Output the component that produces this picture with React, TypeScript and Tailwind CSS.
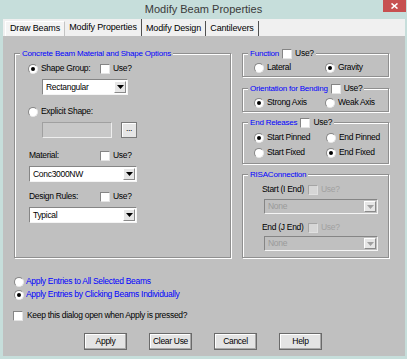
import React from 'react';

function Check({ disabled }: { disabled?: boolean }) {
  return (
    <span
      className={`block w-[10px] h-[10px] shrink-0 border ${
        disabled
          ? 'bg-[#d6d6d6] border-[#a4a4a4] border-r-[#e0e0e0] border-b-[#e0e0e0]'
          : 'bg-white border-[#858585] border-r-[#e4e4e4] border-b-[#e4e4e4]'
      }`}
    />
  );
}

function Radio({ on }: { on?: boolean }) {
  return (
    <span className="flex items-center justify-center w-[10px] h-[10px] shrink-0 rounded-full bg-white border border-[#858585] border-r-[#e8e8e8] border-b-[#e8e8e8]">
      {on && <span className="w-[4px] h-[4px] rounded-full bg-black" />}
    </span>
  );
}

function Select({ value, className, disabled }: { value: string; className: string; disabled?: boolean }) {
  return (
    <div
      className={`flex items-stretch border border-[#858585] border-r-[#f4f4f4] border-b-[#f4f4f4] ${
        disabled ? 'bg-[#c0c0c0] text-[#9a9a9a]' : 'bg-white'
      } ${className}`}
    >
      <span className="flex-1 flex items-center pl-[3px]">{value}</span>
      <span className="w-[12px] m-[1px] flex items-center justify-center bg-[#e6e6e6] border border-white border-r-[#8a8a8a] border-b-[#8a8a8a]">
        <svg width="7" height="4" viewBox="0 0 7 4">
          <path d="M0 0h7L3.5 4z" fill={disabled ? '#a0a0a0' : '#000'} />
        </svg>
      </span>
    </div>
  );
}

function Group({
  title,
  use,
  className,
  children,
}: {
  title: string;
  use?: boolean;
  className: string;
  children?: React.ReactNode;
}) {
  return (
    <div className={`flex flex-col border border-[#8f8f8f] shadow-[inset_1px_1px_0_#fff,1px_1px_0_#fff] ${className}`}>
      <div className="-mt-[7px] ml-[5px] px-[2px] h-[13px] w-fit flex items-center gap-[3px] bg-[#c0c0c0]">
        <span className="text-[#0000ff] text-[8px] tracking-[-0.2px]">{title}</span>
        {use && (
          <>
            <Check />
            <span>Use?</span>
          </>
        )}
      </div>
      {children}
    </div>
  );
}

function RadioPair({ a, b, on, col }: { a: string; b: string; on: 'a' | 'b'; col: string }) {
  return (
    <div className="flex items-center h-[13px] pl-[11px]">
      <div className={`flex items-center gap-[3px] ${col}`}>
        <Radio on={on === 'a'} />
        <span>{a}</span>
      </div>
      <div className="flex items-center gap-[3px]">
        <Radio on={on === 'b'} />
        <span>{b}</span>
      </div>
    </div>
  );
}

function Btn({ label }: { label: string }) {
  return (
    <div className="w-[43px] h-[17px] flex items-center justify-center bg-[#e4e4e4] border border-[#6a6a6a] shadow-[inset_-1px_-1px_0_#a8a8a8,inset_1px_1px_0_#fff]">
      {label}
    </div>
  );
}

export default function App() {
  return (
    <div className="w-[407px] h-[359px] flex flex-col bg-[#c6dedb] whitespace-nowrap text-[8.5px] tracking-[-0.3px] text-black [font-family:'Liberation_Sans',Arial,sans-serif]">
      {/* title bar */}
      <div className="relative h-[19px] shrink-0 flex items-center justify-center">
        <span className="text-[11px] tracking-normal text-[#3a3a3a] pb-[1px]">Modify Beam Properties</span>
        <div className="absolute top-0 right-[1px] w-[23px] h-[12px] flex items-center justify-center bg-[#c75050]">
          <svg width="7" height="6" viewBox="0 0 7 6">
            <path d="M0.5 0.5l6 5M6.5 0.5l-6 5" stroke="#fff" strokeWidth="1.6" />
          </svg>
        </div>
      </div>

      <div className="flex-1 flex flex-col ml-[3px] mr-[2px] mb-[3px]">
        {/* tabs */}
        <div className="h-[17px] shrink-0 flex items-end bg-[#f0f0f0] pl-[2px] text-[9px] tracking-[-0.15px]">
          <div className="w-[60px] h-[15px] flex items-center justify-center bg-[#f4f4f4] border-l border-t border-r border-l-white border-t-white border-r-[#c4c4c4]">
            Draw Beams
          </div>
          <div className="w-[77px] h-[17px] flex items-center justify-center border-r border-r-[#505050]">
            Modify Properties
          </div>
          <div className="w-[64px] h-[15px] flex items-center justify-center border-r border-r-[#505050]">
            Modify Design
          </div>
          <div className="w-[53px] h-[15px] flex items-center justify-center border-r border-r-[#505050]">
            Cantilevers
          </div>
        </div>

        {/* page */}
        <div className="flex-1 flex flex-col bg-[#c0c0c0]">
          <div className="flex mt-[17px] ml-[11px]">
            <Group title="Concrete Beam Material and Shape Options" className="w-[217px] h-[205px]">
              <div className="flex items-center h-[13px] mt-[2px] pl-[13px]">
                <Radio on />
                <span className="ml-[3px] w-[59px]">Shape Group:</span>
                <Check />
                <span className="ml-[3px]">Use?</span>
              </div>
              <Select value="Rectangular" className="mt-[4px] ml-[27px] w-[86px] h-[16px]" />
              <div className="flex items-center h-[13px] mt-[10px] pl-[13px]">
                <Radio />
                <span className="ml-[3px]">Explicit Shape:</span>
              </div>
              <div className="flex mt-[4px] ml-[27px] h-[16px]">
                <div className="w-[70px] bg-[#c8c8c8] border border-[#a0a0a0] border-r-[#eeeeee] border-b-[#eeeeee]" />
                <div className="ml-[9px] w-[16px] flex items-center justify-center bg-[#e6e6e6] border border-[#7a7a7a] shadow-[inset_1px_1px_0_#fff] leading-none pb-[3px]">
                  ...
                </div>
              </div>
              <div className="flex items-center h-[13px] mt-[11px] pl-[14px]">
                <span className="w-[71px]">Material:</span>
                <Check />
                <span className="ml-[3px]">Use?</span>
              </div>
              <Select value="Conc3000NW" className="mt-[4px] ml-[14px] w-[108px] h-[16px]" />
              <div className="flex items-center h-[13px] mt-[8px] pl-[14px]">
                <span className="w-[71px]">Design Rules:</span>
                <Check />
                <span className="ml-[3px]">Use?</span>
              </div>
              <Select value="Typical" className="mt-[4px] ml-[14px] w-[108px] h-[16px]" />
            </Group>

            <div className="flex flex-col ml-[11px]">
              <Group title="Function" use className="w-[147px] h-[24px]">
                <div className="mt-[1px]">
                  <RadioPair a="Lateral" b="Gravity" on="b" col="w-[71px]" />
                </div>
              </Group>
              <Group title="Orientation for Bending" use className="w-[147px] h-[24px] mt-[11px]">
                <div className="mt-[1px]">
                  <RadioPair a="Strong Axis" b="Weak Axis" on="a" col="w-[71px]" />
                </div>
              </Group>
              <Group title="End Releases" use className="w-[147px] h-[42px] mt-[10px]">
                <div className="mt-[2px]">
                  <RadioPair a="Start Pinned" b="End Pinned" on="a" col="w-[72px]" />
                </div>
                <div className="mt-[2px]">
                  <RadioPair a="Start Fixed" b="End Fixed" on="b" col="w-[72px]" />
                </div>
              </Group>
              <Group title="RISAConnection" className="w-[147px] h-[84px] mt-[10px]">
                <div className="flex items-center h-[13px] mt-[2px] pl-[19px]">
                  <span className="w-[46px]">Start (I End)</span>
                  <Check disabled />
                  <span className="ml-[3px] text-[#a0a0a0]">Use?</span>
                </div>
                <Select value="None" disabled className="mt-[3px] ml-[21px] w-[114px] h-[15px]" />
                <div className="flex items-center h-[13px] mt-[7px] pl-[19px]">
                  <span className="w-[46px]">End (J End)</span>
                  <Check disabled />
                  <span className="ml-[3px] text-[#a0a0a0]">Use?</span>
                </div>
                <Select value="None" disabled className="mt-[2px] ml-[21px] w-[114px] h-[15px]" />
              </Group>
            </div>
          </div>

          <div className="flex flex-col mt-[17px] pl-[11px] text-[#0000ff]">
            <div className="flex items-center gap-[2px] h-[13px]">
              <Radio />
              <span>Apply Entries to All Selected Beams</span>
            </div>
            <div className="flex items-center gap-[2px] h-[13px]">
              <Radio on />
              <span>Apply Entries by Clicking Beams Individually</span>
            </div>
          </div>

          <div className="flex items-center gap-[4px] h-[13px] mt-[8px] pl-[10px]">
            <Check />
            <span>Keep this dialog open when Apply is pressed?</span>
          </div>

          <div className="flex gap-[22px] mt-[11px] ml-[81px]">
            <Btn label="Apply" />
            <Btn label="Clear Use" />
            <Btn label="Cancel" />
            <Btn label="Help" />
          </div>
        </div>
      </div>
    </div>
  );
}
